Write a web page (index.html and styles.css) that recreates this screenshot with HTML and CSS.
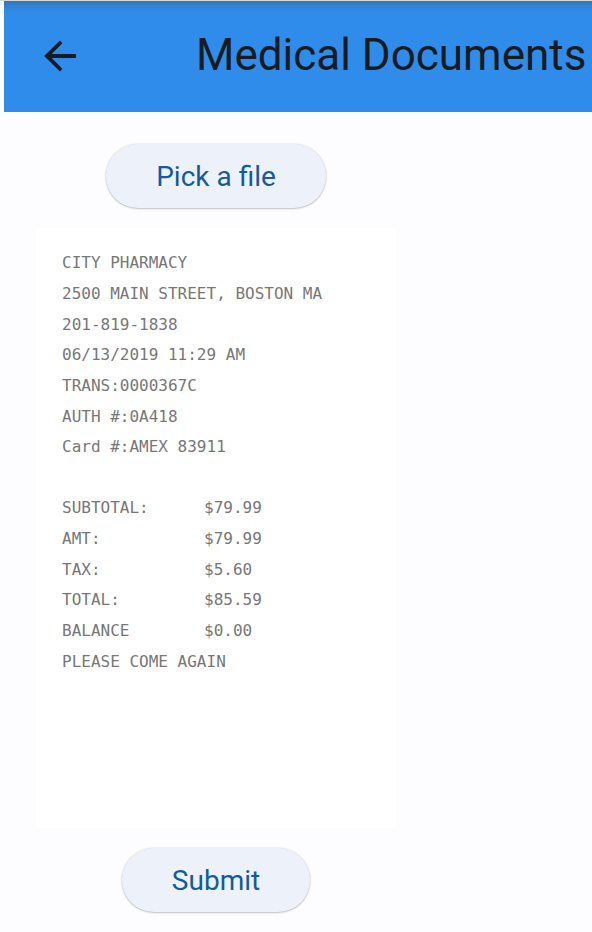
FILE: index.html
```html
<!DOCTYPE html>
<html lang="en">
<head>
<meta charset="utf-8">
<meta name="viewport" content="width=device-width, initial-scale=1">
<title>Medical Documents</title>
<link rel="stylesheet" href="styles.css">
</head>
<body>
<div class="screen">
  <header class="app-bar">
    <button class="back" type="button" aria-label="Back">
      <svg viewBox="0 0 32 32" aria-hidden="true"><path d="M32 14H7.7L18.4 3.2 16 .4.2 16 16 31.6l2.4-2.8L7.7 18H32z"/></svg>
    </button>
    <h1 class="title">Medical Documents</h1>
  </header>
  <main class="content">
    <button class="pill" type="button">Pick a file</button>
    <article class="receipt">
      <div class="details">
        <p>CITY PHARMACY</p>
        <p>2500 MAIN STREET, BOSTON MA</p>
        <p>201-819-1838</p>
        <p>06/13/2019 11:29 AM</p>
        <p>TRANS:0000367C</p>
        <p>AUTH #:0A418</p>
        <p>Card #:AMEX 83911</p>
      </div>
      <table class="totals">
        <tbody>
          <tr><th scope="row">SUBTOTAL:</th><td>$79.99</td></tr>
          <tr><th scope="row">AMT:</th><td>$79.99</td></tr>
          <tr><th scope="row">TAX:</th><td>$5.60</td></tr>
          <tr><th scope="row">TOTAL:</th><td>$85.59</td></tr>
          <tr><th scope="row">BALANCE</th><td>$0.00</td></tr>
        </tbody>
      </table>
      <p class="thanks">PLEASE COME AGAIN</p>
    </article>
    <button class="pill" type="submit">Submit</button>
  </main>
</div>
</body>
</html>
```
FILE: styles.css
```css
* { box-sizing: border-box; }
body {
  margin: 0;
  background: #fdfdff;
  border-top: 1px solid #d5dad8;
  font-family: Roboto, sans-serif;
}
h1, p { margin: 0; font-weight: 400; }
.screen {
  min-height: calc(100vh - 1px);
  padding-left: 4px;
  overflow: hidden;
}
.app-bar {
  display: flex;
  align-items: center;
  height: 111px;
  padding: 0 4px 4px 40px;
  background: linear-gradient(#3576b4, #2f83d5 5px, #308ceb 12px);
}
.back {
  flex: none;
  width: 32px;
  height: 32px;
  margin-top: 2px;
  padding: 0;
  border: 0;
  background: none;
}
.back svg { display: block; width: 32px; height: 32px; fill: #181c20; }
.title {
  margin-left: 120px;
  color: #181c20;
  font-size: 44px;
  line-height: 56px;
  white-space: nowrap;
}
.content {
  display: flex;
  flex-direction: column;
  align-items: center;
  gap: 20px;
  max-width: 424px;
  padding: 32px 32px 20px;
}
.pill {
  height: 64px;
  padding: 2px 50px 0;
  border: 0;
  border-radius: 32px;
  background: #edf2fa;
  box-shadow: 0 1px 2px rgba(0, 0, 0, .2), 0 0 2px rgba(0, 0, 0, .16);
  color: #155a9c;
  font: 400 28px/40px Roboto, sans-serif;
}
.receipt {
  display: grid;
  grid-template-rows: 7fr 1fr 5fr 1fr;
  width: 100%;
  aspect-ratio: 3 / 5;
  padding: 20px 24px 151px 26px;
  background: #fff;
  color: #777;
  font: 16px/24px "DejaVu Sans Mono", monospace;
}
.details { display: grid; grid-auto-rows: 1fr; align-items: center; white-space: nowrap; }
.totals { display: grid; grid-row: 3; }
.totals tbody { display: grid; grid-auto-rows: 1fr; }
.totals tr { display: grid; grid-template-columns: 142px 1fr; align-items: center; }
.totals th, .totals td { padding: 0; font-weight: 400; text-align: left; }
.thanks { grid-row: 4; align-self: center; }
```
